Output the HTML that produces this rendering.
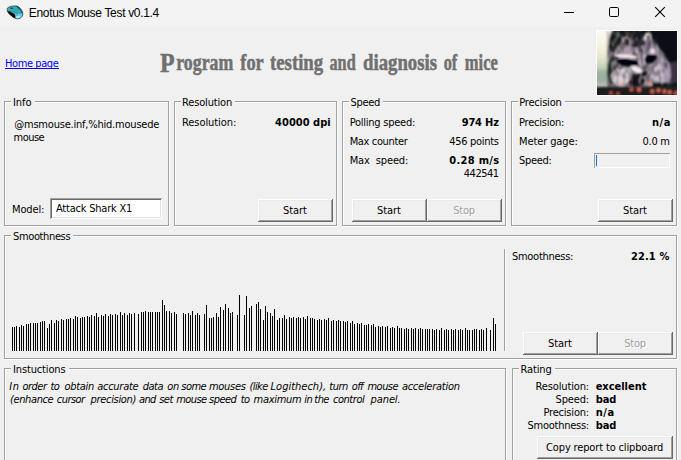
<!DOCTYPE html><html lang='en'><head><meta charset='utf-8'><title>Enotus Mouse Test v0.1.4</title><style>
html,body{margin:0;padding:0;}
body{width:681px;height:460px;overflow:hidden;background:#f0f0f0;position:relative;font-family:'DejaVu Sans Condensed','DejaVu Sans','Liberation Sans',sans-serif;font-stretch:condensed;font-size:11px;color:#000;}
.abs{position:absolute;}
.tbar{position:absolute;left:0;top:0;width:681px;height:27px;background:#f3f3f3;}
.gb{position:absolute;box-sizing:border-box;border:1px solid #a0a0a0;box-shadow:1px 1px 0 #fff,inset 1px 1px 0 #fff;}
.t{position:absolute;white-space:nowrap;line-height:13px;height:13px;}
.lg{background:#f0f0f0;}
.btn{position:absolute;box-sizing:border-box;background:#f0f0f0;box-shadow:inset -1px -1px 0 #696969,inset 1px 1px 0 #fff,inset -2px -2px 0 #a0a0a0,inset 2px 2px 0 #e9e9e9;}
.btn span{position:absolute;white-space:nowrap;line-height:13px;}
.dis{color:#a0a0a0;text-shadow:1px 1px 0 #fff;}
.edit{position:absolute;box-sizing:border-box;background:#fff;box-shadow:inset 1px 1px 0 #a0a0a0,inset -1px -1px 0 #fff,inset 2px 2px 0 #696969,inset -2px -2px 0 #e3e3e3;}
.pbar{position:absolute;box-sizing:border-box;background:#f0f0f0;box-shadow:inset 1px 1px 0 #a0a0a0,inset -1px -1px 0 #fff;}
a{color:#0000ff;text-decoration:none;}
.b{font-weight:bold;}
.i{font-style:italic;}
.tt{font-family:'Liberation Sans','DejaVu Sans',sans-serif;font-size:12px;}
</style></head><body>
<div class="tbar"></div>
<svg class="abs" style="left:4px;top:3px" width="24" height="20" viewBox="4 3 24 20">
<defs><linearGradient id="mg" x1="0" y1="0" x2="1" y2="1"><stop offset="0" stop-color="#46b9c0"/><stop offset="0.5" stop-color="#2d9eae"/><stop offset="0.8" stop-color="#58c6e0"/><stop offset="1" stop-color="#9be6fa"/></linearGradient></defs>
<path d="M7.3 8.2C8.5 6.6 13 5.6 16.6 6C19.4 6.6 22 9.6 22.8 13.2C23.2 15.8 21.4 18.4 18 18.8C16.4 18.9 15 18.5 14.2 17.8L9 13.6C7.6 12.2 6.8 10 7.3 8.2Z" fill="url(#mg)" stroke="#0c3038" stroke-width="0.7"/>
<path d="M7.4 10.9L10.2 11.5L14.8 14.6L15.6 17.9L13.2 17.4L9 14Z" fill="#1a0506"/>
<path d="M16.8 6.6C19.4 8 21.4 10.4 22 13" stroke="#06181c" stroke-width="0.8" fill="none"/>
<path d="M15.2 14.2L21.6 12.4" stroke="#15606c" stroke-width="0.5" fill="none"/>
<ellipse cx="11.7" cy="8.2" rx="1.2" ry="0.6" fill="#04161a"/>
<rect x="15.5" y="13.7" width="1" height="0.9" fill="#f4feff"/><rect x="18.4" y="13.6" width="1" height="0.9" fill="#e8fbff"/>
<ellipse cx="18" cy="16.8" rx="2.6" ry="1.2" fill="#a4ebfc" transform="rotate(-15 18 16.8)"/>
</svg>

<svg class="abs" style="left:550px;top:0" width="131" height="27" viewBox="550 0 131 27" fill="none" stroke="#000" stroke-width="1">
<path d="M564 12.5H574" shape-rendering="crispEdges"/>
<rect x="609.5" y="7.5" width="9" height="9" rx="1.3"/>
<path d="M655.2 7.2L664.8 16.8M664.8 7.2L655.2 16.8" stroke-width="1.05"/>
</svg>

<svg class="abs" style="left:596px;top:30px" width="82" height="66" viewBox="-1 -1 82 66">
<rect x="-1" y="-1" width="82" height="66" fill="#fff"/>
<defs>
<filter id="pb" x="-10%" y="-10%" width="120%" height="120%"><feGaussianBlur stdDeviation="0.8"/></filter>
<filter id="pb2" x="-10%" y="-10%" width="120%" height="120%"><feGaussianBlur stdDeviation="2"/></filter>
<filter id="pn" x="0" y="0" width="100%" height="100%"><feTurbulence type="fractalNoise" baseFrequency="0.2 0.13" numOctaves="1" seed="7"/><feColorMatrix type="matrix" values="0 0 0 0 0  0 0 0 0 0  0 0 0 0 0  3 0 0 0 -1.25"/><feGaussianBlur stdDeviation="0.7"/></filter>
<filter id="pw" x="0" y="0" width="100%" height="100%"><feTurbulence type="fractalNoise" baseFrequency="0.22 0.14" numOctaves="1" seed="21"/><feColorMatrix type="matrix" values="0 0 0 0 1  0 0 0 0 1  0 0 0 0 1  0 3 0 0 -1.25"/><feGaussianBlur stdDeviation="0.7"/></filter>
<clipPath id="pc"><rect x="0" y="0" width="80" height="64"/></clipPath>
<mask id="pm"><path d="M12 0H54L60 14L74 34V54H12Z" fill="#fff" filter="url(#pb2)"/></mask>
<linearGradient id="pl" x1="0" y1="0" x2="0" y2="1"><stop offset="0" stop-color="#fdfaf2"/><stop offset="0.3" stop-color="#f4f2e2"/><stop offset="0.5" stop-color="#e2e4cc"/><stop offset="0.64" stop-color="#c4d0b8"/><stop offset="0.72" stop-color="#9fb29e"/><stop offset="0.86" stop-color="#9aaea0"/><stop offset="0.92" stop-color="#b8bcb0"/><stop offset="1" stop-color="#b8bcb0"/></linearGradient>
</defs>
<g clip-path="url(#pc)">
<rect width="80" height="64" fill="#6e6672"/>
<g filter="url(#pb)">
<rect x="-2" y="-2" width="12.5" height="60" fill="url(#pl)"/>
<path d="M-2 -2H19L14 6L11 14V-2Z" fill="#fdfaf2"/>
<rect x="15" y="-2" width="70" height="10" fill="#141418"/>
<ellipse cx="19.5" cy="11" rx="8" ry="13" fill="#1e2022"/>
<path d="M54 -2H82V42L74 36L67 23L60 14L56 8Z" fill="#0c0e16"/>
<path d="M70 32L82 30V54H70Z" fill="#3c3044"/>
<ellipse cx="62" cy="42" rx="12" ry="15" fill="#a596ac"/>
<ellipse cx="61" cy="40" rx="6.5" ry="10" fill="#c2b2c6" transform="rotate(12 61 40)"/>
<ellipse cx="40" cy="26" rx="24" ry="17" fill="#847a86"/>
<ellipse cx="33" cy="20" rx="9" ry="4" fill="#ac98a6"/>
<ellipse cx="50" cy="17" rx="4" ry="4.5" fill="#8a7a90"/>
<ellipse cx="14" cy="40" rx="4" ry="13" fill="#26302c"/>
<ellipse cx="40" cy="9" rx="10" ry="7.5" fill="#2a2630"/>
<ellipse cx="19" cy="30" rx="5" ry="6" fill="#47464c"/>
<rect x="55" y="51.5" width="28" height="6" fill="#0e1a18"/>
</g>
<g filter="url(#pb)">
<path d="M24.6 13.5C24 8.5 27 5.8 29.4 5.9C32.4 6.1 34.2 9.6 33 13.6" fill="#2a2226" stroke="#b8a2a8" stroke-width="1.4"/>
<path d="M47 9.5C46.2 5 48.6 1.4 51.4 1.2C54.2 1.4 55.6 5 54 9.2Z" fill="#e6dade"/>
<ellipse cx="50.9" cy="6.6" rx="1.7" ry="2.4" fill="#7a686e"/>
<ellipse cx="39.5" cy="49.5" rx="8.5" ry="6.5" fill="#1a181e"/>
<ellipse cx="23.5" cy="46" rx="9.5" ry="8.5" fill="#d6c8d2"/>
<ellipse cx="52.5" cy="51.8" rx="3.5" ry="3.9" fill="#c8928a"/>
<ellipse cx="24.5" cy="54.5" rx="3.2" ry="3.2" fill="#d8b2aa"/>
</g>
<g mask="url(#pm)"><rect width="80" height="64" filter="url(#pn)" fill="#000" opacity="0.42"/><rect width="80" height="64" filter="url(#pw)" opacity="0.32"/></g>
<g filter="url(#pb)">
<ellipse cx="29" cy="25.3" rx="12" ry="2.3" fill="#f0e2e8" transform="rotate(5 29 25.3)"/>
<ellipse cx="55.6" cy="20.1" rx="2.9" ry="3.1" fill="#f0dae4"/>
<ellipse cx="31" cy="31.4" rx="11" ry="4" fill="#06060c" transform="rotate(6 31 31.4)"/>
<ellipse cx="53.5" cy="27.8" rx="6.6" ry="4.3" fill="#06060c" transform="rotate(-22 53.5 27.8)"/>
<path d="M42.6 21L43.3 33.5" stroke="#e2d2e0" stroke-width="1.9" fill="none"/>
<path d="M46.6 24L46.9 33" stroke="#d2c2d0" stroke-width="1.2" fill="none"/>
<path d="M40.3 9C42 15 44 22 45.1 33.5" stroke="#1a1a22" stroke-width="1.7" fill="none"/>
<ellipse cx="40" cy="38.6" rx="6.8" ry="2.7" fill="#f6eef0" transform="rotate(24 40 38.6)"/>
<ellipse cx="47" cy="42.4" rx="2.8" ry="2.7" fill="#08080c"/>
<rect x="-2" y="56" width="84" height="10" fill="#1a1a1c"/>
<g fill="#c8584c"><circle cx="34.5" cy="58.5" r="2"/><circle cx="42" cy="58.8" r="2.3"/><circle cx="55.3" cy="60.5" r="2.2"/><circle cx="61.5" cy="59.5" r="2.3"/><circle cx="67.5" cy="60.5" r="2.2"/><circle cx="72.7" cy="61.2" r="2.2"/><circle cx="79" cy="62" r="2.1"/><circle cx="14" cy="62" r="1.8"/><circle cx="21" cy="62.5" r="1.6"/></g>
<g fill="#e8958a"><circle cx="42" cy="58.4" r="0.9"/><circle cx="61.5" cy="59.1" r="0.9"/><circle cx="67.5" cy="60.1" r="0.8"/><circle cx="55.3" cy="60.1" r="0.8"/><circle cx="72.7" cy="60.8" r="0.8"/></g>
</g>
</g>
</svg>

<svg class="abs" style="left:150px;top:45px" width="360" height="36" viewBox="150 45 360 36">
<g font-family="'Liberation Serif','DejaVu Serif',serif" font-weight="bold" font-size="24" fill="#707070" stroke="#707070" stroke-width="0.55">
<text y="69.5"><tspan x="160" y="72.4" font-size="27" textLength="14.6" lengthAdjust="spacingAndGlyphs">P</tspan><tspan x="176.3" y="69.5" textLength="57" lengthAdjust="spacingAndGlyphs">rogram</tspan></text>
<text x="240.3" y="69.5" textLength="23.5" lengthAdjust="spacingAndGlyphs">for</text>
<text x="270" y="69.5" textLength="53.2" lengthAdjust="spacingAndGlyphs">testing</text>
<text x="329.5" y="69.5" textLength="26.2" lengthAdjust="spacingAndGlyphs">and</text>
<text x="363" y="69.5" textLength="74.0" lengthAdjust="spacingAndGlyphs">diagnosis</text>
<text x="443.7" y="69.5" textLength="13.6" lengthAdjust="spacingAndGlyphs">of</text>
<text x="464.8" y="69.5" textLength="33.0" lengthAdjust="spacingAndGlyphs">mice</text>
</g></svg>

<div class="gb" style="left:4px;top:101px;width:165px;height:125px"></div>
<div class="gb" style="left:174px;top:101px;width:163px;height:125px"></div>
<div class="gb" style="left:342px;top:101px;width:164px;height:125px"></div>
<div class="gb" style="left:511px;top:101px;width:166px;height:125px"></div>
<div class="gb" style="left:4px;top:235px;width:673px;height:124px"></div>
<div class="gb" style="left:4px;top:368px;width:502px;height:103px"></div>
<div class="gb" style="left:512px;top:368px;width:165px;height:103px"></div>
<svg class="abs" style="left:0;top:0" width="681" height="460" viewBox="0 0 681 460" shape-rendering="crispEdges"><path d="M12.5 327V351M14.5 327V351M16.5 326V351M19.5 327V351M21.5 325V351M23.5 326V351M26.5 324V351M28.5 324V351M30.5 323V351M33.5 323V351M35.5 323V351M37.5 323V351M40.5 322V351M42.5 321V351M44.5 321V351M47.5 328V351M49.5 324V351M51.5 320V351M54.5 323V351M56.5 320V351M58.5 321V351M61.5 319V351M63.5 320V351M66.5 319V351M68.5 319V351M70.5 318V351M73.5 319V351M75.5 316V351M77.5 317V351M80.5 318V351M82.5 317V351M84.5 317V351M87.5 316V351M89.5 317V351M91.5 315V351M94.5 316V351M96.5 313V351M98.5 317V351M101.5 315V351M103.5 316V351M105.5 314V351M108.5 316V351M110.5 314V351M112.5 315V351M115.5 314V351M117.5 315V351M120.5 312V351M122.5 315V351M124.5 313V351M127.5 315V351M129.5 313V351M131.5 314V351M134.5 313V351M138.5 314V351M141.5 312V351M143.5 312V351M145.5 311V351M148.5 312V351M150.5 312V351M152.5 312V351M155.5 312V351M157.5 312V351M159.5 312V351M162.5 300V351M164.5 305V351M166.5 311V351M169.5 311V351M171.5 313V351M174.5 312V351M176.5 314V351M183.5 313V351M185.5 314V351M188.5 313V351M190.5 315V351M192.5 311V351M195.5 315V351M197.5 313V351M199.5 315V351M204.5 314V351M206.5 305V351M209.5 318V351M211.5 318V351M213.5 317V351M216.5 313V351M218.5 317V351M220.5 307V351M223.5 310V351M225.5 304V351M228.5 308V351M230.5 313V351M232.5 312V351M237.5 315V351M239.5 295V351M244.5 315V351M246.5 296V351M249.5 308V351M251.5 306V351M256.5 304V351M258.5 302V351M260.5 309V351M263.5 320V351M265.5 306V351M267.5 312V351M270.5 313V351M272.5 316V351M274.5 309V351M277.5 320V351M279.5 318V351M282.5 318V351M284.5 315V351M286.5 319V351M289.5 317V351M291.5 318V351M293.5 317V351M296.5 318V351M298.5 317V351M300.5 318V351M303.5 317V351M305.5 319V351M307.5 316V351M310.5 318V351M312.5 318V351M314.5 319V351M317.5 320V351M319.5 319V351M321.5 320V351M324.5 319V351M326.5 320V351M328.5 318V351M331.5 321V351M333.5 320V351M336.5 321V351M338.5 320V351M340.5 321V351M343.5 321V351M345.5 322V351M347.5 321V351M350.5 323V351M352.5 321V351M354.5 324V351M357.5 323V351M359.5 324V351M361.5 323V351M364.5 325V351M366.5 325V351M368.5 324V351M371.5 325V351M373.5 324V351M375.5 327V351M378.5 326V351M380.5 327V351M382.5 326V351M385.5 327V351M387.5 326V351M390.5 328V351M392.5 327V351M394.5 328V351M397.5 326V351M399.5 328V351M401.5 328V351M404.5 329V351M406.5 328V351M408.5 329V351M411.5 328V351M413.5 329V351M415.5 328V351M418.5 329V351M420.5 328V351M422.5 329V351M425.5 329V351M427.5 329V351M429.5 329V351M432.5 329V351M434.5 330V351M436.5 329V351M439.5 330V351M441.5 328V351M444.5 330V351M446.5 329V351M448.5 330V351M451.5 329V351M453.5 330V351M455.5 329V351M458.5 330V351M460.5 329V351M462.5 330V351M465.5 328V351M467.5 330V351M469.5 330V351M472.5 330V351M474.5 329V351M476.5 329V351M479.5 330V351M481.5 329V351M483.5 330V351M486.5 328V351M490.5 330V351M493.5 318V351M495.5 324V351" stroke="#000" stroke-width="1" fill="none"/></svg>
<div class="abs" style="left:504px;top:249px;width:1px;height:102px;background:#a0a0a0"></div>
<div class="abs" style="left:505px;top:249px;width:1px;height:102px;background:#fff"></div>
<div class="edit" style="left:50px;top:198px;width:112px;height:21px"></div>
<div class="pbar" style="left:594px;top:153px;width:76px;height:15px"></div>
<div class="abs" style="left:596px;top:155px;width:1px;height:11px;background:#0878d8"></div>
<span class="t tt" style="left:28.80px;top:7px;letter-spacing:-0.322px;">Enotus Mouse Test v0.1.4</span>
<a class="t" href="#" style="left:5.00px;top:57px;letter-spacing:-0.413px">Home page</a>
<div class="abs" style="left:5px;top:68px;width:54px;height:1px;background:#0000ff"></div>
<span class="t lg" style="left:11px;top:96px;width:23.5px;padding-left:2.00px;box-sizing:border-box;overflow:hidden;letter-spacing:-0.057px">Info</span>
<span class="t lg" style="left:181px;top:96px;width:54.0px;padding-left:1.00px;box-sizing:border-box;overflow:hidden;letter-spacing:-0.154px">Resolution</span>
<span class="t lg" style="left:349px;top:96px;width:34.0px;padding-left:1.50px;box-sizing:border-box;overflow:hidden;letter-spacing:-0.312px">Speed</span>
<span class="t lg" style="left:518px;top:96px;width:46.5px;padding-left:1.30px;box-sizing:border-box;overflow:hidden;letter-spacing:-0.205px">Precision</span>
<span class="t lg" style="left:11px;top:230px;width:62.4px;padding-left:2.00px;box-sizing:border-box;overflow:hidden;letter-spacing:-0.367px">Smoothness</span>
<span class="t lg" style="left:11px;top:363px;width:57.5px;padding-left:2.00px;box-sizing:border-box;overflow:hidden;letter-spacing:-0.139px">Instuctions</span>
<span class="t lg" style="left:519px;top:363px;width:35.5px;padding-left:1.50px;box-sizing:border-box;overflow:hidden;letter-spacing:-0.12px">Rating</span>
<span class="t" style="left:14.30px;top:118px;letter-spacing:-0.211px;">@msmouse.inf,%hid.mousede</span>
<span class="t" style="left:13.60px;top:131px;letter-spacing:-0.55px;">mouse</span>
<span class="t" style="left:12.00px;top:203px;letter-spacing:-0.144px;">Model:</span>
<span class="t" style="left:56.00px;top:202px;letter-spacing:-0.218px;">Attack Shark X1</span>
<span class="t" style="left:182.00px;top:116px;letter-spacing:-0.066px;">Resolution:</span>
<span class="t b" style="left:275.10px;top:116px;letter-spacing:0.02px;">40000 dpi</span>
<span class="t" style="left:349.70px;top:116px;letter-spacing:-0.245px;">Polling speed:</span>
<span class="t b" style="left:461.70px;top:116px;letter-spacing:-0.176px;">974 Hz</span>
<span class="t" style="left:349.70px;top:135px;letter-spacing:-0.361px;">Max counter</span>
<span class="t" style="left:449.30px;top:135px;letter-spacing:-0.307px;">456 points</span>
<span class="t" style="left:349.70px;top:154px;letter-spacing:-0.135px;">Max  speed:</span>
<span class="t b" style="left:449.20px;top:154px;letter-spacing:0.316px;">0.28 m/s</span>
<span class="t" style="left:463.80px;top:167px;letter-spacing:-0.495px;">442541</span>
<span class="t" style="left:519.00px;top:116px;letter-spacing:-0.235px;">Precision:</span>
<span class="t b" style="left:651.94px;top:116px;letter-spacing:0.6px;">n/a</span>
<span class="t" style="left:519.00px;top:135px;letter-spacing:-0.113px;">Meter gage:</span>
<span class="t" style="left:642.60px;top:135px;letter-spacing:-0.294px;">0.0 m</span>
<span class="t" style="left:519.00px;top:154px;letter-spacing:-0.307px;">Speed:</span>
<span class="t" style="left:512.00px;top:250px;letter-spacing:-0.286px;">Smoothness:</span>
<span class="t b" style="left:630.90px;top:250px;letter-spacing:0.148px;">22.1 %</span>
<span class="t i" style="left:9.29px;top:380px;letter-spacing:0.6px;">In</span>
<span class="t i" style="left:22.60px;top:380px;letter-spacing:-0.55px;">order</span>
<span class="t i" style="left:50.54px;top:380px;letter-spacing:-0.55px;">to</span>
<span class="t i" style="left:64.60px;top:380px;letter-spacing:-0.326px;">obtain</span>
<span class="t i" style="left:97.30px;top:380px;letter-spacing:-0.29px;">accurate</span>
<span class="t i" style="left:142.86px;top:380px;letter-spacing:-0.55px;">data</span>
<span class="t i" style="left:167.20px;top:380px;letter-spacing:-0.253px;">on</span>
<span class="t i" style="left:181.35px;top:380px;letter-spacing:-0.55px;">some</span>
<span class="t i" style="left:209.00px;top:380px;letter-spacing:-0.303px;">mouses</span>
<span class="t i" style="left:249.40px;top:380px;letter-spacing:-0.55px;">(like</span>
<span class="t i" style="left:270.60px;top:380px;letter-spacing:-0.002px;">Logithech),</span>
<span class="t i" style="left:329.30px;top:380px;letter-spacing:-0.506px;">turn</span>
<span class="t i" style="left:351.67px;top:380px;letter-spacing:-0.55px;">off</span>
<span class="t i" style="left:367.54px;top:380px;letter-spacing:-0.55px;">mouse</span>
<span class="t i" style="left:401.90px;top:380px;letter-spacing:-0.263px;">acceleration</span>
<span class="t i" style="left:10.00px;top:393px;letter-spacing:-0.383px;">(enhance</span>
<span class="t i" style="left:56.78px;top:393px;letter-spacing:-0.55px;">cursor</span>
<span class="t i" style="left:90.60px;top:393px;letter-spacing:-0.329px;">precision)</span>
<span class="t i" style="left:138.88px;top:393px;letter-spacing:-0.55px;">and</span>
<span class="t i" style="left:159.28px;top:393px;letter-spacing:-0.55px;">set</span>
<span class="t i" style="left:176.14px;top:393px;letter-spacing:-0.55px;">mouse</span>
<span class="t i" style="left:209.09px;top:393px;letter-spacing:-0.55px;">speed</span>
<span class="t i" style="left:240.69px;top:393px;letter-spacing:-0.55px;">to</span>
<span class="t i" style="left:253.60px;top:393px;letter-spacing:-0.304px;">maximum</span>
<span class="t i" style="left:304.25px;top:393px;letter-spacing:-0.55px;">in</span>
<span class="t i" style="left:314.32px;top:393px;letter-spacing:-0.55px;">the</span>
<span class="t i" style="left:332.90px;top:393px;letter-spacing:-0.444px;">control</span>
<span class="t i" style="left:370.60px;top:393px;letter-spacing:-0.112px;">panel.</span>
<span class="t" style="left:535.60px;top:380px;letter-spacing:-0.146px;">Resolution:</span>
<span class="t b" style="left:595.70px;top:380px;letter-spacing:-0.027px;">excellent</span>
<span class="t" style="left:555.50px;top:393px;letter-spacing:-0.147px;">Speed:</span>
<span class="t b" style="left:595.70px;top:393px;letter-spacing:-0.13px;">bad</span>
<span class="t" style="left:543.50px;top:406px;letter-spacing:-0.201px;">Precision:</span>
<span class="t b" style="left:595.70px;top:406px;letter-spacing:0.6px;">n/a</span>
<span class="t" style="left:527.50px;top:419px;letter-spacing:-0.256px;">Smoothness:</span>
<span class="t b" style="left:595.70px;top:419px;letter-spacing:-0.13px;">bad</span>
<div class="btn" style="left:258px;top:199px;width:75px;height:23px"><span class="" style="left:25.00px;top:5px;letter-spacing:-0.073px">Start</span></div>
<div class="btn" style="left:352px;top:199px;width:75px;height:23px"><span class="" style="left:25.00px;top:5px;letter-spacing:-0.073px">Start</span></div>
<div class="btn" style="left:427px;top:199px;width:75px;height:23px"><span class="dis" style="left:26.15px;top:5px;letter-spacing:-0.172px">Stop</span></div>
<div class="btn" style="left:598px;top:199px;width:75px;height:23px"><span class="" style="left:25.00px;top:5px;letter-spacing:-0.073px">Start</span></div>
<div class="btn" style="left:523px;top:332px;width:75px;height:23px"><span class="" style="left:25.00px;top:5px;letter-spacing:-0.073px">Start</span></div>
<div class="btn" style="left:598px;top:332px;width:75px;height:23px"><span class="dis" style="left:26.15px;top:5px;letter-spacing:-0.172px">Stop</span></div>
<div class="btn" style="left:537px;top:436px;width:136px;height:23px"><span class="" style="left:9.10px;top:5px;letter-spacing:-0.146px">Copy report to clipboard</span></div>
</body></html>
